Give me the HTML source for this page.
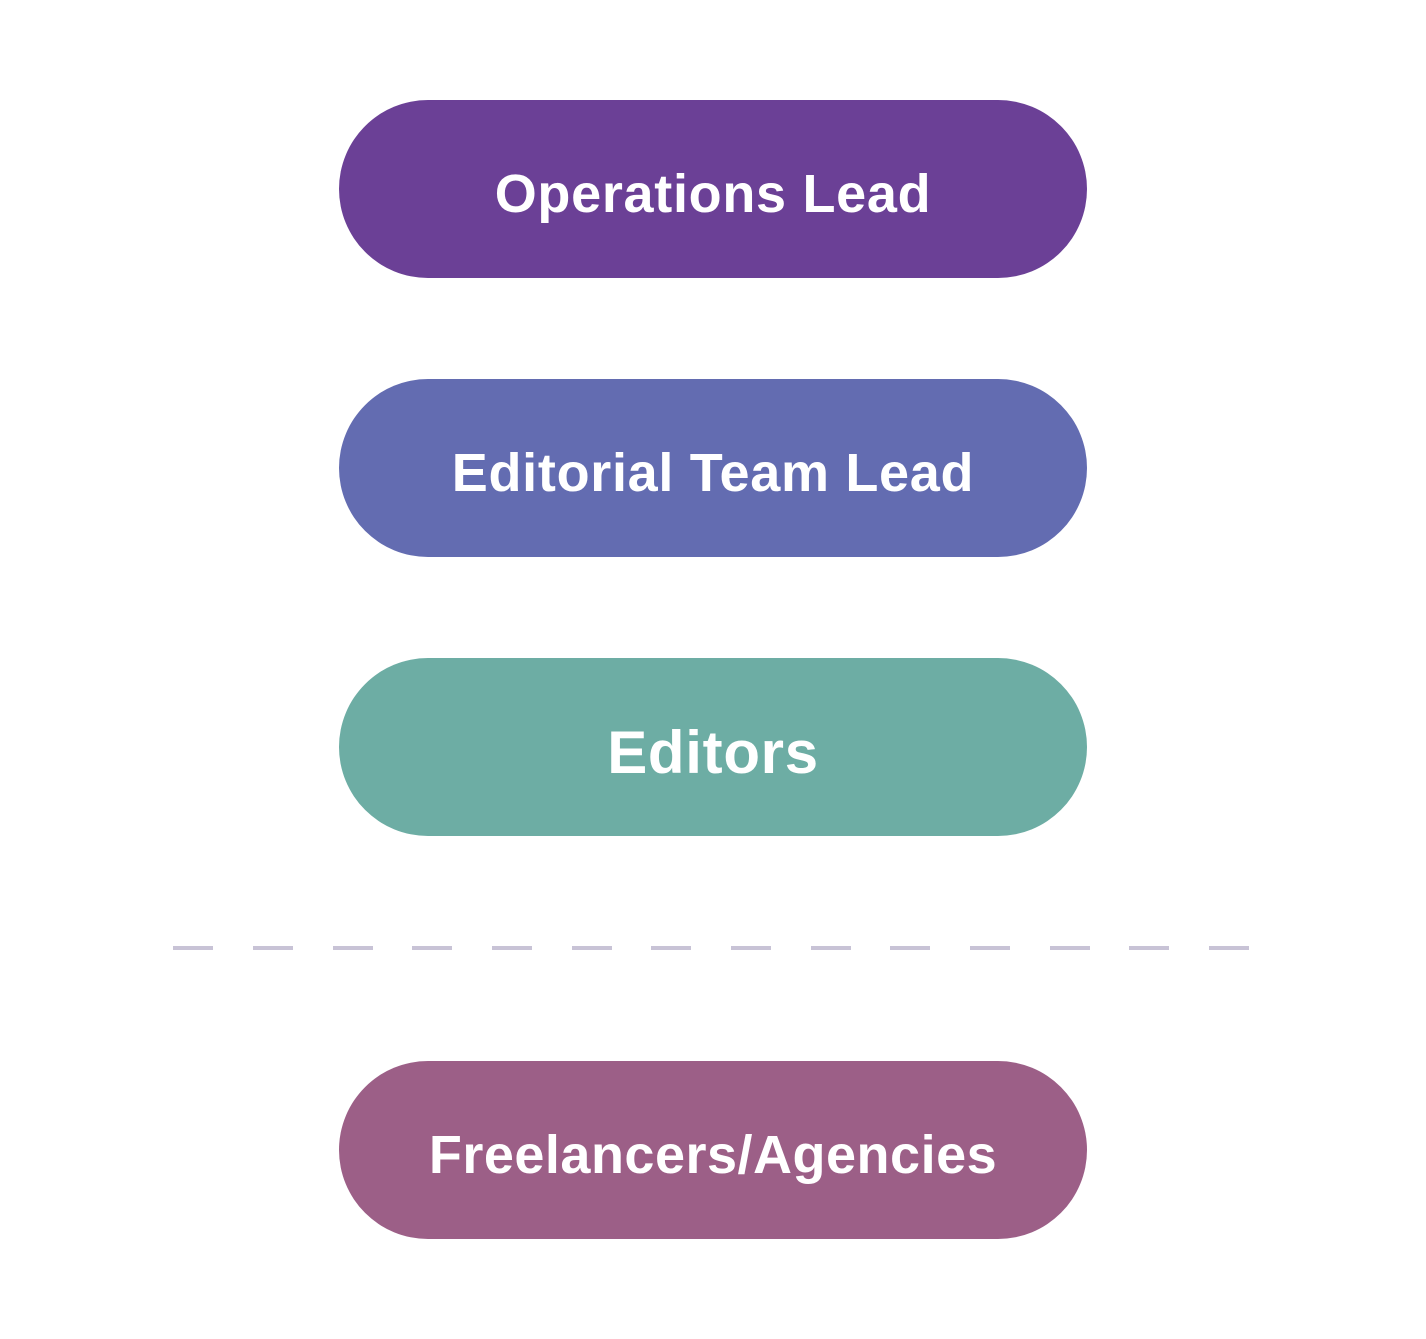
<!DOCTYPE html>
<html><head><style>
body{margin:0;width:1426px;height:1339px;background:#fff;position:relative;font-family:"Liberation Sans",sans-serif;}
.p{position:absolute;left:339px;width:748px;height:178px;border-radius:89px;color:#fff;font-weight:bold;font-size:54px;letter-spacing:0.7px;display:flex;align-items:center;justify-content:center;box-sizing:border-box;padding-top:10px;}
.d{position:absolute;top:946px;width:40px;height:4px;background:#c8c3d6;}
</style></head><body>
<div class="p" style="top:100px;background:#6b4096">Operations Lead</div>
<div class="p" style="top:379px;background:#636cb1">Editorial Team Lead</div>
<div class="p" style="top:658px;background:#6dada4;font-size:60px">Editors</div>
<div class="p" style="top:1061px;background:#9c5f87;font-size:54px;letter-spacing:0.5px">Freelancers/Agencies</div>
<div class="d" style="left:173px"></div><div class="d" style="left:253px"></div><div class="d" style="left:333px"></div><div class="d" style="left:412px"></div><div class="d" style="left:492px"></div><div class="d" style="left:572px"></div><div class="d" style="left:651px"></div><div class="d" style="left:731px"></div><div class="d" style="left:811px"></div><div class="d" style="left:890px"></div><div class="d" style="left:970px"></div><div class="d" style="left:1050px"></div><div class="d" style="left:1129px"></div><div class="d" style="left:1209px"></div>
</body></html>
